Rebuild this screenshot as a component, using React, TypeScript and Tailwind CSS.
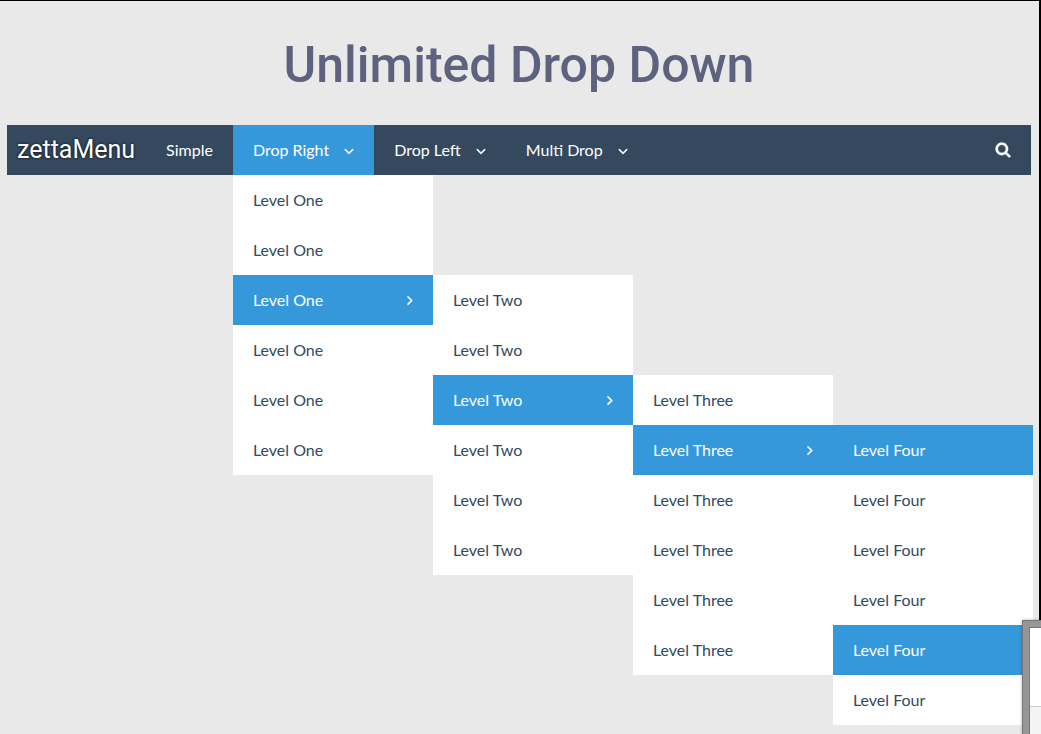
import React from "react";

type Item = {
  label: string;
  active?: boolean;
  children?: Item[];
};

const levelFour: Item[] = [
  { label: "Level Four", active: true },
  { label: "Level Four" },
  { label: "Level Four" },
  { label: "Level Four" },
  { label: "Level Four", active: true },
  { label: "Level Four" },
];

const levelThree: Item[] = [
  { label: "Level Three" },
  { label: "Level Three", active: true, children: levelFour },
  { label: "Level Three" },
  { label: "Level Three" },
  { label: "Level Three" },
  { label: "Level Three" },
];

const levelTwo: Item[] = [
  { label: "Level Two" },
  { label: "Level Two" },
  { label: "Level Two", active: true, children: levelThree },
  { label: "Level Two" },
  { label: "Level Two" },
  { label: "Level Two" },
];

const levelOne: Item[] = [
  { label: "Level One" },
  { label: "Level One" },
  { label: "Level One", active: true, children: levelTwo },
  { label: "Level One" },
  { label: "Level One" },
  { label: "Level One" },
];

function AngleDown() {
  return (
    <svg
      viewBox="0 0 1152 1792"
      className="h-4 w-[10px]"
      fill="currentColor"
      stroke="currentColor"
      strokeWidth="60"
      aria-hidden="true"
    >
      <path d="M1075 864q0 13-10 23l-466 466q-10 10-23 10t-23-10l-466-466q-10-10-10-23t10-23l50-50q10-10 23-10t23 10l393 393 393-393q10-10 23-10t23 10l50 50q10 10 10 23z" />
    </svg>
  );
}

function AngleRight() {
  return (
    <svg
      viewBox="0 0 640 1792"
      className="h-4 w-[6px]"
      fill="currentColor"
      stroke="currentColor"
      strokeWidth="60"
      aria-hidden="true"
    >
      <path d="M595 960q0 13-10 23l-466 466q-10 10-23 10t-23-10l-50-50q-10-10-10-23t10-23l393-393-393-393q-10-10-10-23t10-23l50-50q10-10 23-10t23 10l466 466q10 10 10 23z" />
    </svg>
  );
}

function SearchIcon() {
  return (
    <svg
      viewBox="0 64 1792 1792"
      className="h-4 w-4"
      fill="currentColor"
      stroke="currentColor"
      strokeWidth="40"
      aria-hidden="true"
    >
      <path d="M1216 832q0-185-131.5-316.5t-316.5-131.5-316.5 131.5-131.5 316.5 131.5 316.5 316.5 131.5 316.5-131.5 131.5-316.5zm512 832q0 52-38 90t-90 38q-54 0-90-38l-343-342q-179 124-399 124-143 0-273.5-55.5t-225-150-150-225-55.5-273.5 55.5-273.5 150-225 225-150 273.5-55.5 273.5 55.5 225 150 150 225 55.5 273.5q0 220-124 399l343 343q37 37 37 90z" />
    </svg>
  );
}

function Submenu({ items, nested = false }: { items: Item[]; nested?: boolean }) {
  return (
    <ul className={`absolute w-[200px] bg-white ${nested ? "left-full top-0" : "left-0 top-full"}`}>
      {items.map((item, index) => (
        <li key={index} className="relative">
          <a
            href="#"
            className={`flex h-[50px] items-center justify-between px-5 ${
              item.active ? "bg-[#3498db] text-white" : "text-[#34495e]"
            }`}
          >
            {item.label}
            {item.children && <AngleRight />}
          </a>
          {item.children && <Submenu items={item.children} nested />}
        </li>
      ))}
    </ul>
  );
}

const topItems: Item[] = [
  { label: "Simple" },
  { label: "Drop Right", active: true, children: levelOne },
  { label: "Drop Left", children: [] },
  { label: "Multi Drop", children: [] },
];

export default function App() {
  return (
    <div className="relative h-screen overflow-hidden font-['Lato',sans-serif] text-base">
      <main className="h-full border-t border-r-2 border-black bg-[#e9e9e9] pr-2 pl-[7px]">
        <h1 className="pt-8 pb-7 text-center font-['Roboto',sans-serif] text-[50px] leading-[64px] font-medium text-[#5d637f]">
          Unlimited Drop Down
        </h1>
        <nav className="flex h-[50px] items-center bg-[#34495e] text-white">
          <a
            href="#"
            className="pr-[11px] pl-[10px] font-['Roboto',sans-serif] text-[25px] [text-shadow:0_0_3px_#000]"
          >
            zettaMenu
          </a>
          <ul className="flex">
            {topItems.map((item) => (
              <li key={item.label} className="relative">
                <a
                  href="#"
                  className={`flex h-[50px] items-center gap-[15px] px-5 whitespace-nowrap ${
                    item.active ? "bg-[#3498db]" : ""
                  }`}
                >
                  {item.label}
                  {item.children && <AngleDown />}
                </a>
                {item.children && item.children.length > 0 && <Submenu items={item.children} />}
              </li>
            ))}
          </ul>
          <button type="button" aria-label="Search" className="ml-auto flex h-[50px] items-center px-5">
            <SearchIcon />
          </button>
        </nav>
      </main>

      <div className="absolute right-0 bottom-0 flex h-[114px] w-[19px] flex-col border-t border-l border-[#777777] bg-[#969696] pt-[6px] pl-[6px] shadow-[0_0_3px_rgba(0,0,0,0.3)]">
        <div className="flex grow flex-col border-t border-l border-[#777777] bg-white">
          <div className="h-[79px] border-b border-[#cfcfcf]" />
          <div className="grow bg-[#f4f4f4]" />
        </div>
      </div>
    </div>
  );
}
